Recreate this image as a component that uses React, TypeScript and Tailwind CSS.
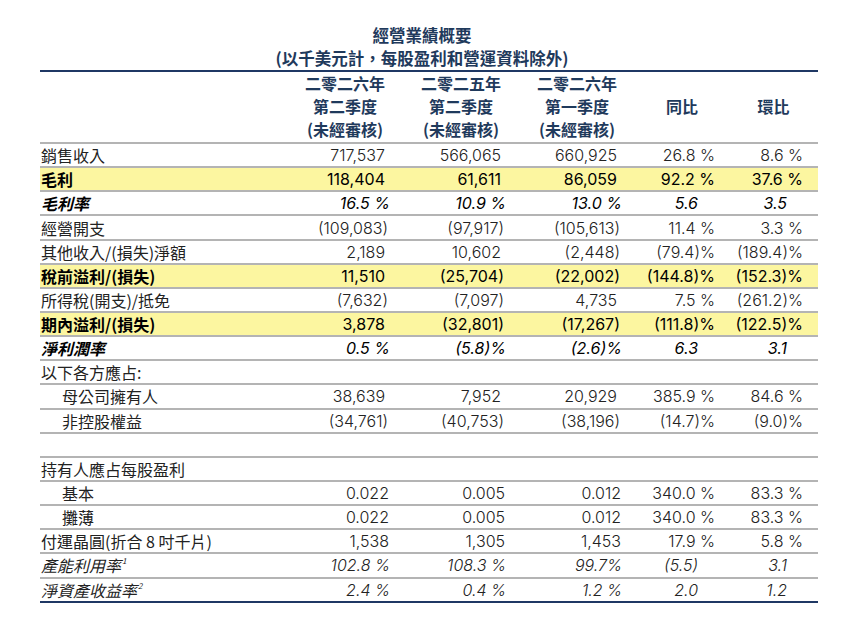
import React from "react";

type Row = {
  label?: string;
  sup?: string;
  vals?: string[];
  hl?: boolean;
  bold?: boolean;
  italic?: boolean;
  indent?: boolean;
  lower?: boolean;
  last?: boolean;
};

const rows: Row[] = [
  { label: "銷售收入", vals: ["717,537", "566,065", "660,925", "26.8 %", "8.6 %"] },
  { label: "毛利", hl: true, bold: true, vals: ["118,404", "61,611", "86,059", "92.2 %", "37.6 %"] },
  { label: "毛利率", bold: true, italic: true, vals: ["16.5 %", "10.9 %", "13.0 %", "5.6", "3.5"] },
  { label: "經營開支", vals: ["(109,083)", "(97,917)", "(105,613)", "11.4 %", "3.3 %"] },
  { label: "其他收入/(損失)淨額", vals: ["2,189", "10,602", "(2,448)", "(79.4)%", "(189.4)%"] },
  { label: "稅前溢利/(損失)", hl: true, bold: true, vals: ["11,510", "(25,704)", "(22,002)", "(144.8)%", "(152.3)%"] },
  { label: "所得稅(開支)/抵免", vals: ["(7,632)", "(7,097)", "4,735", "7.5 %", "(261.2)%"] },
  { label: "期內溢利/(損失)", hl: true, bold: true, vals: ["3,878", "(32,801)", "(17,267)", "(111.8)%", "(122.5)%"] },
  { label: "淨利潤率", bold: true, italic: true, vals: ["0.5 %", "(5.8)%", "(2.6)%", "6.3", "3.1"] },
  { label: "以下各方應占:" },
  { label: "母公司擁有人", indent: true, vals: ["38,639", "7,952", "20,929", "385.9 %", "84.6 %"] },
  { label: "非控股權益", indent: true, vals: ["(34,761)", "(40,753)", "(38,196)", "(14.7)%", "(9.0)%"] },
  {},
  { label: "持有人應占每股盈利" },
  { label: "基本", indent: true, lower: true, vals: ["0.022", "0.005", "0.012", "340.0 %", "83.3 %"] },
  { label: "攤薄", indent: true, lower: true, vals: ["0.022", "0.005", "0.012", "340.0 %", "83.3 %"] },
  { label: "付運晶圓(折合 8 吋千片)", lower: true, vals: ["1,538", "1,305", "1,453", "17.9 %", "5.8 %"] },
  { label: "產能利用率", sup: "1", italic: true, vals: ["102.8 %", "108.3 %", "99.7%", "(5.5)", "3.1"] },
  { label: "淨資產收益率", sup: "2", italic: true, vals: ["2.4 %", "0.4 %", "1.2 %", "2.0", "1.2"], last: true },
];

const heads = [
  ["二零二六年", "第二季度", "(未經審核)"],
  ["二零二五年", "第二季度", "(未經審核)"],
  ["二零二六年", "第一季度", "(未經審核)"],
  ["同比"],
  ["環比"],
];

const cjk = "font-['Noto_Sans_CJK_TC',sans-serif]";
const num = "font-['Inter','Noto_Sans_CJK_TC',sans-serif]";

function padFor(row: Row, col: number, v: string) {
  if (col >= 3) {
    if (row.italic) return "pr-[31px]";
    return col === 3 ? "pr-[14px]" : "pr-[15px]";
  }
  if (row.italic) return "pr-[13px]";
  if (row.lower) return "pr-[14px]";
  if (v.endsWith(")")) return "pr-[15px]";
  return "pr-[18px]";
}

export default function App() {
  return (
    <div className="h-[620px] w-[855px] overflow-hidden bg-white text-[#222]">
      <div className="ml-[40px] w-[778px]">
        <div className={`pt-[24px] pr-[14px] text-center text-[16.5px] font-bold leading-[23px] text-[#1f3a5c] ${cjk}`}>
          <div>經營業績概要</div>
          <div>(以千美元計，每股盈利和營運資料除外)</div>
        </div>

        <div className="grid grid-cols-[247px_116px_116px_116px_94px_89px] border-t-2 border-[#1f3864]">
          <div className="h-[72px] border-b-2 border-[#b4b4b4]" />
          {heads.map((h, i) => (
            <div
              key={i}
              className={`flex h-[72px] flex-col items-center justify-center border-b-2 border-[#b4b4b4] pb-[2px] text-[16px] font-bold leading-[23px] text-[#1f3a5c] ${cjk}`}
            >
              {h.map((t) => (
                <div key={t}>{t}</div>
              ))}
            </div>
          ))}

          {rows.map((r, ri) => {
            const bg = r.hl ? "bg-[#fcf6a0]" : "";
            const line = r.last ? "border-b-2 border-[#1f3864]" : "border-b-2 border-[#b4b4b4]";
            const style = `${r.bold ? "font-bold text-black" : "font-normal"} ${r.italic ? "italic" : ""}`;
            return (
              <React.Fragment key={ri}>
                <div
                  className={`flex h-[24.15px] items-center ${bg} ${line} ${r.indent ? "pl-[22px]" : "pl-[1px]"} text-[16px] ${style} ${cjk}`}
                >
                  {r.label}
                  {r.sup && <sup className="ml-[1px] text-[8px] font-normal">{r.sup}</sup>}
                </div>
                {[0, 1, 2, 3, 4].map((c) => {
                  const v = r.vals ? r.vals[c] : "";
                  const w = r.hl || r.bold ? "font-normal text-black" : "font-light";
                  return (
                    <div
                      key={c}
                      className={`flex h-[24.15px] items-center justify-end ${bg} ${line} ${padFor(r, c, v)} text-[16px] ${w} ${r.italic ? "italic" : ""} ${num}`}
                    >
                      {v}
                    </div>
                  );
                })}
              </React.Fragment>
            );
          })}
        </div>
      </div>
    </div>
  );
}
